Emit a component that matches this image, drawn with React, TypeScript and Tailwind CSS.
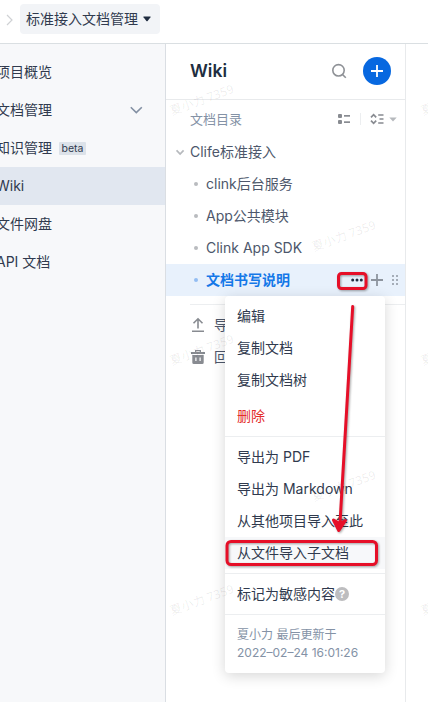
import React from "react";

function SideItem({ label, active, children }: { label: string; active?: boolean; children?: React.ReactNode }) {
  return (
    <div className={`flex h-[38px] items-center ${active ? "bg-[#e1e7f0]" : ""}`}>
      <span className="-ml-1 whitespace-nowrap">{label}</span>
      {children}
    </div>
  );
}

function TreeItem({ label }: { label: string }) {
  return (
    <div className="flex h-8 items-center pl-7">
      <span className="size-1 rounded-full bg-[#b9bbbf]" />
      <span className="ml-2">{label}</span>
    </div>
  );
}

function MenuItem({ label, className = "" }: { label: string; className?: string }) {
  return <div className={`flex h-8 items-center whitespace-nowrap px-3 ${className}`}>{label}</div>;
}

const marks = [
  { x: 202, y: 100 },
  { x: 453, y: 100 },
  { x: 344, y: 236 },
  { x: 202, y: 350 },
  { x: 453, y: 350 },
  { x: 344, y: 486 },
  { x: 202, y: 600 },
  { x: 453, y: 600 },
];

export default function App() {
  return (
    <div className="relative flex h-[702px] w-[428px] flex-col overflow-hidden bg-white font-[Inter,'Noto_Sans_CJK_SC',sans-serif] text-sm text-[#303a4e]">
      <header className="flex h-11 shrink-0 items-start border-b border-[#dadfe2] pt-1">
        <svg className="ml-1 mt-2 shrink-0" width="12" height="16" viewBox="0 0 12 16" fill="none" stroke="#cfd1d4" strokeWidth="1.2">
          <path d="M3 3l5 5-5 5" />
        </svg>
        <div className="ml-1 flex h-[30px] w-[140px] items-center rounded bg-[#f2f4f7] pl-1.5">
          <span>标准接入文档管理</span>
          <svg className="ml-[5px]" width="8" height="6" viewBox="0 0 8 6" fill="#202d40">
            <path d="M.8.5h6.4q.8 0 .3.7L4.6 5q-.6.7-1.2 0L.5 1.200Q0 .5.8.5z" />
          </svg>
        </div>
      </header>

      <div className="flex min-h-0 flex-1">
        <aside className="w-[166px] shrink-0 border-r border-[#dadee3] bg-[#f7f8fa] pt-[9px]">
          <SideItem label="项目概览" />
          <SideItem label="文档管理">
            <svg className="ml-auto mr-[22px]" width="14" height="8" viewBox="0 0 14 8" fill="none" stroke="#8390a3" strokeWidth="1.6">
              <path d="M1.800 1.200L7.300 6.600l5.500-5.400" />
            </svg>
          </SideItem>
          <SideItem label="知识管理">
            <span className="ml-[7px] flex h-[13px] w-[27px] items-center justify-center rounded-[1px] bg-[#dce2e9] text-[10.500px]">beta</span>
          </SideItem>
          <SideItem label="Wiki" active />
          <SideItem label="文件网盘" />
          <SideItem label="API 文档" />
        </aside>

        <main className="w-60 shrink-0 border-r border-[#e8eaec] text-[#4d576b]">
          <div className="flex h-14 items-center border-b border-[#e8eaec] pl-6 pr-3.5">
            <h1 className="-mt-0.5 text-[17.500px] font-semibold text-[#202d40]">Wiki</h1>
            <svg className="-mt-0.5 ml-auto" width="16" height="16" viewBox="0 0 16 16" fill="none" stroke="#8e9196" strokeWidth="1.600">
              <circle cx="7.500" cy="7.300" r="5.700" />
              <path d="M11.500 11.500l3.300 3.300" />
            </svg>
            <div className="-mt-0.5 ml-4 flex size-7 items-center justify-center rounded-full bg-[#0768e0]">
              <svg width="12" height="12" viewBox="0 0 12 12" stroke="white" strokeWidth="1.800">
                <path d="M6 0v12M0 6h12" />
              </svg>
            </div>
          </div>

          <div className="flex h-9 items-center pl-6 pr-2 pt-0.5 text-[13px] text-[#8492a6]">
            <span>文档目录</span>
            <svg className="ml-auto" width="12" height="12" viewBox="0 0 12 12" fill="#888b91">
              <rect x="0" y="1" width="4" height="4" rx="1" />
              <rect x="0" y="7" width="4" height="4" rx="1" />
              <rect x="6" y="2" width="6" height="1.700" />
              <rect x="6" y="8.300" width="6" height="1.700" />
            </svg>
            <span className="ml-2.5 h-3 w-px bg-[#eceef0]" />
            <svg className="ml-[9px]" width="15" height="12" viewBox="0 0 15 12" fill="none" stroke="#888b91" strokeWidth="1.700">
              <path d="M1 4.300l2.600-2.600 2.600 2.600M1 7.700l2.600 2.600 2.600-2.600M8.200 2h5.300M9.500 6h4M8.200 10h5.300" />
            </svg>
            <svg className="ml-1" width="8" height="5" viewBox="0 0 8 5" fill="#b6b9bd">
              <path d="M.3.500h7.400L4 4.500z" />
            </svg>
          </div>

          <div className="flex h-8 items-center pl-2.5">
            <svg width="9" height="7" viewBox="0 0 9 7" fill="none" stroke="#b6b9bd" strokeWidth="1.700">
              <path d="M.6 1.300l3.500 3.700 3.500-3.700" />
            </svg>
            <span className="ml-[5px]">Clife标准接入</span>
          </div>
          <TreeItem label="clink后台服务" />
          <TreeItem label="App公共模块" />
          <TreeItem label="Clink App SDK" />
          <div className="flex h-8 items-center bg-[#e8f1fc] pl-7 pr-1.5">
            <span className="size-1 rounded-full bg-[#93bdf3]" />
            <span className="ml-2 font-bold text-[#1478e8]">文档书写说明</span>
            <svg className="ml-auto" width="12" height="4" viewBox="0 0 12 4" fill="#202d40">
              <circle cx="1.700" cy="2" r="1.500" />
              <circle cx="6" cy="2" r="1.500" />
              <circle cx="10.300" cy="2" r="1.500" />
            </svg>
            <svg className="ml-2" width="12" height="12" viewBox="0 0 12 12" stroke="#8d949e" strokeWidth="1.800">
              <path d="M6 0v12M0 6h12" />
            </svg>
            <svg className="ml-2" width="8" height="12" viewBox="0 0 8 12" fill="#a5adb8">
              <path d="M1 1h2v2H1zM1 5h2v2H1zM1 9h2v2H1zM5 1h2v2H5zM5 5h2v2H5zM5 9h2v2H5z" />
            </svg>
          </div>
          <div className="ml-6 mt-2 h-px bg-[#eceef0]" />
          <div className="mt-1 flex h-8 items-center pl-[25px]">
            <svg width="14" height="16" viewBox="0 0 14 16" fill="none" stroke="#888b91" strokeWidth="1.600">
              <path d="M7 11.500V2M2.500 6.300L7 1.800l4.500 4.500M1 14.200h12" />
            </svg>
            <span className="ml-[9px]">导入文档</span>
          </div>
          <div className="flex h-8 items-center pl-[25px]">
            <svg width="14" height="14" viewBox="0 0 14 14" fill="#888b91">
              <path d="M4 0h6v2h4v2H0V2h4zM5.300 1.200V2h3.400v-.8zM1.300 5h11.400v7.500q0 1.500-1.500 1.500H2.800q-1.500 0-1.500-1.500zM4.300 7.500v3.500h1.200V7.500zM8.500 7.500v3.500h1.200V7.500z" fillRule="evenodd" />
            </svg>
            <span className="ml-[9px]">回收站</span>
          </div>
        </main>
      </div>

      <div className="absolute left-[225px] top-[296px] flex h-[377px] w-40 flex-col rounded-sm bg-white pt-1 shadow-[0_3px_14px_rgba(0,0,0,0.16)]">
        <MenuItem label="编辑" />
        <MenuItem label="复制文档" />
        <MenuItem label="复制文档树" />
        <MenuItem label="删除" className="mt-1 text-[#e32b2b]" />
        <div className="my-1 h-px shrink-0 bg-[#eceef0]" />
        <MenuItem label="导出为 PDF" />
        <MenuItem label="导出为 Markdown" />
        <MenuItem label="从其他项目导入至此" />
        <MenuItem label="从文件导入子文档" className="bg-[#f7f8fa]" />
        <div className="my-1 h-px shrink-0 bg-[#eceef0]" />
        <div className="flex h-8 items-center pl-3">
          <span>标记为敏感内容</span>
          <span className="flex size-3.5 items-center justify-center rounded-full bg-[#bdbdbf] text-[11px] font-bold leading-none text-white">?</span>
        </div>
        <div className="mt-1 h-px shrink-0 bg-[#eceef0]" />
        <div className="px-3 pt-[11px] text-xs leading-[18px] text-[#8492a6]">
          <div>夏小力 最后更新于</div>
          <div>2022–02–24 16:01:26</div>
        </div>
      </div>

      {marks.map((m) => (
        <span
          key={`${m.x}-${m.y}`}
          className="pointer-events-none absolute -translate-x-1/2 -translate-y-1/2 -rotate-[20deg] whitespace-nowrap font-['Noto_Sans','Noto_Sans_CJK_SC',sans-serif] text-xs text-black/8"
          style={{ left: m.x, top: m.y }}
        >
          夏小力 7359
        </span>
      ))}

      <svg className="pointer-events-none absolute inset-0 drop-shadow-[1.500px_1.500px_1px_rgba(0,0,0,0.35)]" width="428" height="702" viewBox="0 0 428 702" fill="none" stroke="#e60f28" strokeWidth="3" strokeLinecap="round" strokeLinejoin="round">
        <rect x="338.500" y="273.500" width="27.500" height="15" rx="3" />
        <rect x="227" y="541.500" width="149.500" height="23" rx="4" />
        <path d="M352.700 306.500L340 523" />
        <path d="M333.500 520L338.800 530.500L345.500 520.500L339.700 523.500z" fill="#e60f28" />
      </svg>
    </div>
  );
}
